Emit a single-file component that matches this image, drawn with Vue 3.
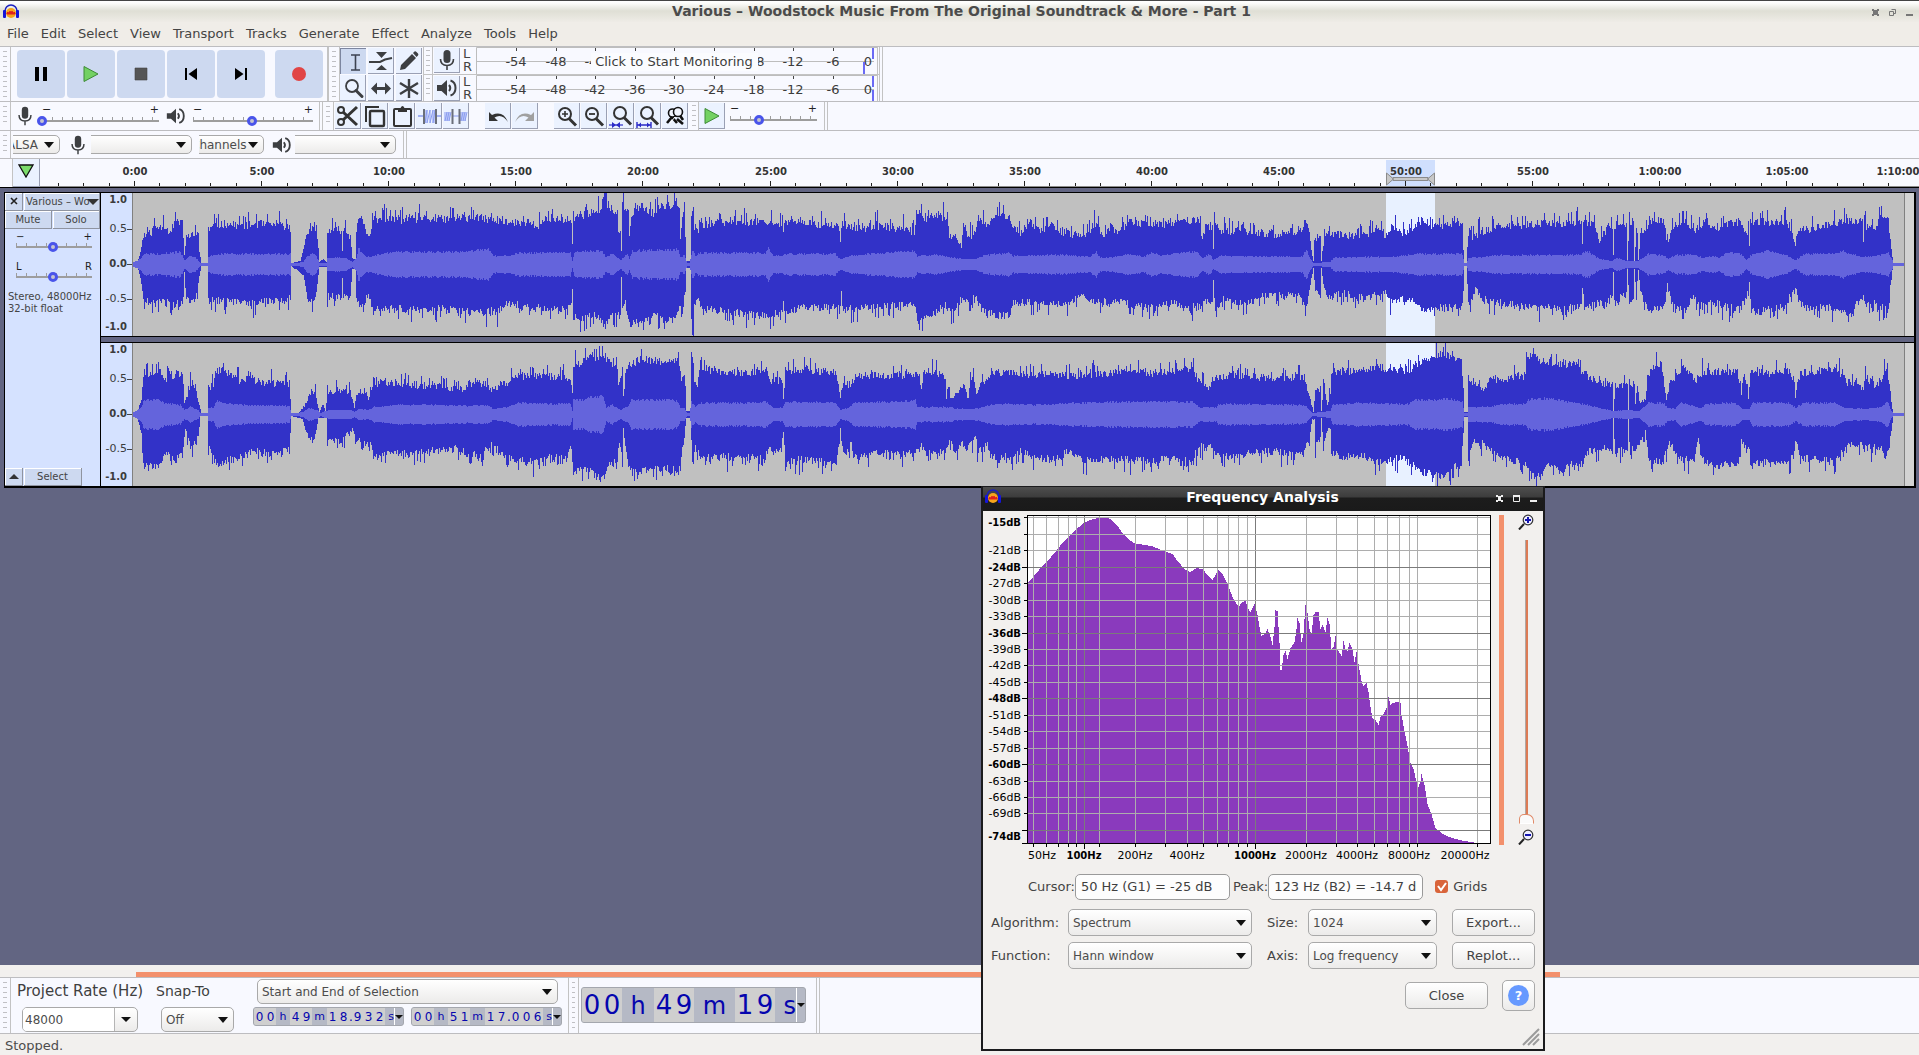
<script setup>
const menus = ['File', 'Edit', 'Select', 'View', 'Transport', 'Tracks', 'Generate', 'Effect', 'Analyze', 'Tools', 'Help']
const transport = [
  { id: 'pause', label: 'Pause' },
  { id: 'play', label: 'Play' },
  { id: 'stop', label: 'Stop' },
  { id: 'start', label: 'Skip to Start' },
  { id: 'end', label: 'Skip to End' },
  { id: 'record', label: 'Record' },
]
const tools = [
  { id: 'ibeam', label: 'Selection Tool' },
  { id: 'envelope', label: 'Envelope Tool' },
  { id: 'pencil', label: 'Draw Tool' },
  { id: 'magnify', label: 'Zoom Tool' },
  { id: 'shift', label: 'Time Shift Tool' },
  { id: 'multi', label: 'Multi Tool' },
]
const editGroups = [
  [
    { id: 'cut', label: 'Cut' },
    { id: 'copy', label: 'Copy' },
    { id: 'paste', label: 'Paste' },
    { id: 'trim', label: 'Trim Audio' },
    { id: 'silence', label: 'Silence Audio' },
  ],
  [
    { id: 'undo', label: 'Undo' },
    { id: 'redo', label: 'Redo' },
  ],
  [
    { id: 'zoomin', label: 'Zoom In' },
    { id: 'zoomout', label: 'Zoom Out' },
    { id: 'zoomsel', label: 'Fit Selection' },
    { id: 'zoomfit', label: 'Fit Project' },
    { id: 'zoomtoggle', label: 'Zoom Toggle' },
  ],
]
const meterMarks = [-54, -48, -42, -36, -30, -24, -18, -12, -6].map((db, i) => ({ db, x: 40 + Math.round(i * 39.6) }))
const meters = [
  { icon: 'mic', label: 'Recording level', prompt: true, marks: meterMarks.filter((k) => k.db < -36 || k.db > -24) },
  { icon: 'speaker', label: 'Playback level', prompt: false, marks: meterMarks },
]

// Time ruler: one tick a minute, a label each five
const minuteWidth = 25.42
const ticks = Array.from({ length: 73 }, (_, i) => i - 3).map((m) => ({
  x: Math.round(95 + m * minuteWidth),
  major: m >= 0 && m % 5 === 0,
}))
const labels = Array.from({ length: 15 }, (_, i) => {
  const m = i * 5
  const text = m < 60 ? `${m}:00` : `1:${String(m - 60).padStart(2, '0')}:00`
  return { text, x: i === 14 ? 1858 : Math.round(95 + m * minuteWidth) }
})

// Level envelopes, as "column:height" pairs
const env = {
  top1: '132:1 137:1 140:12 143:28 150:30 155:36 165:38 168:32 172:36 175:42 182:40 184:10 186:28 190:25 192:32 198:28 199:12 201:1 207:1 208:34 215:38 225:40 240:38 260:40 270:37 280:38 289:36 290:34 291:1 300:3 303:14 306:30 312:35 317:28 319:2 323:5 326:2 327:30 330:33 341:34 342:12 343:34 350:28 352:6 355:5 356:30 358:42 363:42 366:28 370:28 372:42 380:46 400:43 430:44 480:46 492:43 500:42 530:40 540:38 545:44 570:44 572:20 573:46 580:48 600:52 604:70 606:70 607:56 617:50 618:33 620:33 621:12 622:58 628:50 629:28 631:50 640:58 653:48 660:58 672:58 674:66 679:58 680:28 682:45 684:52 685:30 686:3 689:3 690:5 691:50 693:58 694:33 698:34 700:38 720:41 760:42 782:40 783:30 785:43 800:40 836:38 838:38 840:24 842:40 860:34 880:38 900:34 914:32 917:50 925:45 935:50 947:44 949:26 955:26 961:18 963:40 968:26 975:30 978:45 985:38 996:48 1009:48 1012:38 1020:30 1030:42 1040:32 1050:40 1065:30 1085:28 1095:40 1103:25 1110:38 1118:30 1128:42 1145:40 1160:38 1180:42 1199:44 1202:26 1205:36 1212:38 1213:14 1214:40 1220:32 1240:32 1260:31 1270:27 1290:33 1300:30 1304:40 1308:38 1310:20 1313:3 1314:25 1320:28 1321:3 1323:20 1326:30 1340:29 1360:28 1380:33 1387:27 1392:38 1400:30 1415:36 1422:44 1431:38 1441:38 1451:40 1462:38 1463:15 1464:1 1466:1 1468:30 1471:26 1476:27 1481:32 1501:38 1521:38 1542:40 1562:40 1581:42 1582:20 1584:40 1594:42 1597:28 1599:22 1602:28 1608:36 1612:32 1613:8 1614:38 1626:38 1627:2 1629:42 1633:42 1634:2 1636:34 1638:4 1640:28 1645:30 1648:42 1663:44 1667:20 1669:22 1671:36 1683:44 1696:34 1704:42 1716:36 1739:42 1746:28 1748:36 1749:16 1750:42 1769:42 1787:42 1793:26 1795:20 1798:34 1810:34 1835:40 1861:44 1863:22 1864:38 1876:34 1881:50 1888:45 1890:22 1892:6 1893:1 1904:1',
  bot1: '132:1 137:1 140:14 143:34 150:38 160:37 175:38 183:35 184:8 186:34 195:34 199:10 201:1 207:1 208:36 225:35 240:38 260:36 280:36 290:32 291:1 303:10 308:36 315:34 319:2 326:2 327:31 341:33 342:12 343:32 350:30 352:4 355:4 356:36 363:40 366:30 370:30 373:42 385:44 430:43 480:46 500:45 505:37 530:43 560:43 570:42 572:25 573:50 580:55 595:48 605:60 612:50 620:50 621:13 622:40 625:35 627:50 630:58 640:56 655:48 665:58 675:50 680:40 683:45 686:3 690:3 691:55 693:65 694:36 698:33 700:43 740:48 760:50 780:48 783:35 785:50 800:42 840:42 841:25 842:44 870:42 900:40 914:38 917:52 930:50 945:40 950:42 953:50 960:32 963:38 968:34 976:28 980:42 995:50 1010:50 1013:38 1025:36 1050:38 1070:38 1080:28 1090:36 1100:34 1110:38 1120:32 1130:40 1150:42 1170:38 1200:42 1204:34 1212:35 1213:15 1215:44 1222:34 1245:38 1265:30 1290:30 1302:30 1306:42 1310:20 1313:3 1315:25 1320:30 1321:3 1323:20 1327:32 1345:28 1360:32 1370:30 1385:28 1392:38 1400:34 1415:36 1425:46 1441:42 1462:42 1464:1 1466:1 1468:40 1476:22 1481:34 1501:38 1532:42 1562:42 1581:42 1582:22 1584:42 1599:38 1607:38 1612:30 1613:6 1615:40 1620:32 1626:30 1627:2 1629:36 1633:33 1634:4 1636:30 1638:5 1640:28 1648:42 1663:44 1667:20 1671:36 1683:44 1694:32 1700:40 1714:38 1739:44 1746:32 1749:15 1751:46 1769:44 1785:42 1790:30 1795:20 1798:34 1803:42 1835:42 1850:48 1863:30 1866:40 1876:38 1888:46 1890:22 1892:5 1893:1 1904:1',
  rms1: '132:1 140:5 145:10 160:10 180:12 184:4 190:8 195:7 199:2 201:0 207:0 208:8 225:10 290:10 291:0 303:2 306:7 312:11 316:8 319:1 326:1 327:6 345:6 352:2 356:6 358:16 365:7 372:7 380:10 400:12 460:12 488:15 494:8 508:8 520:11 570:11 572:3 574:12 602:13 605:7 612:10 620:4 627:10 629:5 632:13 673:14 678:15 680:7 684:9 687:0 689:0 692:14 695:8 700:11 765:11 768:16 773:8 782:8 785:10 835:10 840:5 850:8 870:10 900:12 914:13 917:8 935:9 960:5 975:5 985:9 1000:10 1010:11 1012:8 1060:9 1090:7 1096:12 1100:6 1115:7 1130:10 1143:7 1153:12 1160:8 1180:11 1196:12 1202:6 1210:10 1213:4 1220:8 1302:7 1306:14 1310:5 1313:1 1330:2 1333:6 1360:7 1390:7 1420:10 1462:10 1464:0 1466:0 1468:6 1481:7 1501:9 1580:9 1587:13 1599:5 1612:3 1616:6 1628:3 1638:3 1648:10 1665:8 1668:5 1675:9 1694:9 1704:6 1709:8 1719:6 1726:11 1739:11 1746:4 1751:9 1766:13 1785:9 1795:4 1805:10 1833:10 1842:13 1861:7 1876:8 1888:11 1892:4 1893:0 1904:0',
  top2: '132:1 137:2 141:14 143:40 152:40 160:43 166:34 170:36 178:42 182:36 184:10 190:26 195:28 199:8 201:1 207:1 208:26 213:30 216:44 225:42 235:36 243:30 248:42 255:32 270:30 289:30 291:1 298:1 304:8 310:20 315:20 319:2 323:10 325:2 327:20 335:22 345:22 351:18 354:6 356:18 365:24 368:15 372:28 380:32 390:32 400:30 425:28 440:28 445:25 463:24 468:30 480:28 492:24 500:30 509:30 511:37 530:38 560:36 570:36 572:24 573:48 580:50 590:56 600:56 610:52 613:44 617:48 618:28 622:45 623:16 624:28 626:45 632:50 640:55 660:52 675:55 679:50 681:30 684:38 685:20 686:3 690:3 691:60 693:48 694:28 697:30 699:46 720:42 740:40 765:42 770:32 782:34 783:14 785:42 800:44 820:42 836:42 838:30 840:15 842:28 850:30 855:38 870:38 900:38 919:38 921:25 923:40 935:42 945:35 946:14 948:30 950:18 957:18 963:30 968:15 970:38 974:30 976:18 980:32 986:28 990:40 1010:42 1025:38 1045:40 1060:38 1075:38 1100:40 1120:42 1130:46 1145:40 1170:42 1180:44 1193:45 1196:34 1202:30 1208:24 1213:35 1225:38 1250:37 1270:35 1290:36 1303:36 1308:22 1311:10 1313:2 1315:26 1320:20 1321:3 1323:26 1327:10 1330:20 1331:42 1350:42 1370:44 1380:46 1400:43 1410:44 1415:50 1430:54 1444:60 1451:56 1461:56 1463:25 1464:2 1467:2 1468:35 1476:28 1483:26 1491:34 1511:36 1525:38 1527:56 1532:58 1542:52 1562:50 1580:50 1582:36 1592:35 1603:30 1612:28 1613:2 1615:30 1627:28 1628:2 1629:26 1634:30 1635:10 1637:30 1639:12 1645:14 1648:38 1653:46 1661:48 1666:14 1670:32 1683:46 1690:38 1696:32 1702:42 1724:42 1737:42 1740:24 1742:16 1744:38 1748:16 1750:42 1769:40 1790:42 1795:18 1800:42 1815:40 1837:46 1845:32 1856:30 1862:24 1866:36 1876:28 1882:36 1886:46 1890:20 1892:5 1893:1 1904:1',
  bot2: '132:1 137:2 141:18 143:45 153:52 160:48 166:38 175:44 182:40 185:12 190:30 198:20 200:1 207:1 208:30 213:40 218:48 230:44 245:40 255:36 270:38 280:38 289:32 291:1 302:4 308:22 314:26 318:3 326:3 327:24 340:26 352:14 356:24 365:30 370:28 376:42 385:36 400:38 420:37 445:33 462:34 466:38 480:40 492:28 500:38 515:44 535:48 550:40 565:40 571:32 573:56 585:52 595:60 603:64 610:48 617:45 619:25 622:48 623:14 626:40 629:52 640:56 650:52 673:54 676:60 679:55 681:38 683:30 686:3 690:3 692:50 694:40 696:27 699:42 720:42 745:42 765:42 768:34 781:36 783:15 785:46 800:44 820:46 836:48 838:30 840:14 842:32 848:38 851:25 853:42 870:38 900:38 914:38 921:30 925:38 944:36 950:26 955:38 961:26 966:34 975:20 977:34 982:36 986:24 990:40 1000:42 1012:42 1021:36 1035:42 1050:44 1070:36 1080:44 1100:44 1120:44 1150:46 1170:42 1192:44 1193:50 1195:36 1201:28 1206:36 1210:28 1213:38 1225:40 1250:38 1270:36 1300:38 1308:28 1312:4 1314:4 1315:30 1320:24 1321:3 1323:32 1327:14 1330:12 1331:36 1340:42 1360:40 1380:46 1400:42 1410:48 1420:56 1441:60 1461:48 1464:2 1467:2 1468:44 1473:26 1483:28 1491:36 1511:44 1525:50 1532:60 1540:62 1547:50 1562:56 1572:48 1582:48 1587:36 1603:34 1612:32 1613:2 1615:36 1627:34 1628:2 1629:30 1633:36 1640:28 1645:14 1648:44 1663:46 1669:26 1678:44 1694:44 1698:26 1701:44 1714:50 1738:48 1741:24 1746:34 1749:26 1751:48 1764:46 1790:48 1795:20 1800:42 1815:44 1835:46 1840:36 1856:28 1866:32 1881:32 1886:44 1891:14 1893:1 1904:1',
  rms2: '132:1 140:6 144:14 160:14 163:11 180:9 184:4 190:7 198:4 200:0 207:0 208:6 213:6 216:13 225:11 240:9 289:8 291:0 303:2 308:6 317:4 320:1 328:4 350:4 354:2 358:5 368:4 374:7 400:9 430:9 470:8 488:9 493:5 508:7 518:11 545:10 570:10 572:3 573:14 583:14 590:17 603:17 606:7 612:9 620:4 628:8 631:14 672:14 678:12 680:6 684:6 687:0 689:0 691:12 695:7 700:11 760:11 766:12 773:6 782:6 785:12 835:11 840:4 850:7 853:11 900:12 915:14 917:7 945:7 960:5 975:5 990:9 1010:10 1030:9 1080:11 1130:12 1192:12 1200:6 1212:7 1216:6 1218:10 1300:9 1306:7 1312:1 1330:3 1332:9 1360:11 1390:10 1408:10 1415:14 1451:15 1462:12 1464:0 1467:0 1468:7 1491:7 1501:10 1524:10 1530:15 1547:15 1562:13 1582:10 1603:5 1613:3 1628:4 1639:3 1648:11 1663:11 1667:6 1675:5 1680:11 1701:6 1706:10 1734:11 1742:5 1749:5 1752:11 1790:11 1795:6 1803:11 1835:11 1845:6 1866:5 1881:7 1887:12 1891:3 1893:0 1904:0',
}
const X0 = 133
const X1 = 1904
const MID = 71
function columns(text, seed, rough, spikes) {
  const pts = text.split(' ').map((p) => p.split(':').map(Number))
  let s = seed
  const rand = () => {
    s = (s * 1664525 + 1013904223) % 4294967296
    return s / 4294967296
  }
  const out = []
  let k = 0
  for (let x = X0; x < X1; x++) {
    while (k < pts.length - 2 && pts[k + 1][0] <= x) k++
    const [xa, a] = pts[k]
    const [xb, b] = pts[k + 1]
    let v = a + ((b - a) * (x - xa)) / (xb - xa)
    const r = rand()
    const q = rand()
    if (v > 3) v += (r - 0.45) * rough * Math.min(1, v / 30)
    if (spikes && v > 18 && q > 0.78) v += (q - 0.78) * 58
    out.push(Math.max(1, Math.min(MID, Math.round(v))))
  }
  return out
}
function shape(top, bot) {
  let d = `M0 ${MID}`
  top.forEach((v, i) => { d += `V${MID - v}H${i + 1}` })
  for (let i = bot.length - 1; i >= 0; i--) d += `V${MID + 1 + bot[i]}H${i}`
  return d + 'Z'
}
const rms1 = columns(env.rms1, 5, 6, false)
const rms2 = columns(env.rms2, 9, 6, false)
const channels = [
  { peak: shape(columns(env.top1, 11, 8, true), columns(env.bot1, 23, 8, true)), rms: shape(rms1, rms1) },
  { peak: shape(columns(env.top2, 37, 8, true), columns(env.bot2, 51, 8, true)), rms: shape(rms2, rms2) },
]

// Spectrum plot
const dbRows = [
  [7, '-15dB', true], [35, '-21dB'], [52, '-24dB', true], [68, '-27dB'], [85, '-30dB'], [101, '-33dB'], [118, '-36dB', true],
  [134, '-39dB'], [150, '-42dB'], [167, '-45dB'], [183, '-48dB', true], [200, '-51dB'], [216, '-54dB'], [233, '-57dB'],
  [249, '-60dB', true], [266, '-63dB'], [282, '-66dB'], [298, '-69dB'], [321, '-74dB', true],
]
const hLines = [2, 19, 35, 52, 68, 85, 101, 118, 134, 150, 167, 183, 200, 216, 233, 249, 266, 282, 298, 315, 328]
const hBold = [52, 118, 183, 249, 315, 328]
const vLines = [6, 19, 31, 41, 49, 57, 72, 108, 138, 160, 176, 190, 201, 211, 220, 228, 279, 309, 330, 347, 360, 372, 382, 390, 450]
const vBold = [57, 228]
const hzLabels = [
  [15, '50Hz'], [57, '100Hz', true], [108, '200Hz'], [160, '400Hz'], [228, '1000Hz', true], [279, '2000Hz'], [330, '4000Hz'], [382, '8000Hz'], [438, '20000Hz'],
]
const spectrum = [
  [0, 68], [4, 64], [8, 59], [14, 52], [20, 46], [27, 38], [34, 29], [41, 22], [48, 15], [55, 9], [62, 5], [70, 3], [80, 2], [84, 5],
  [90, 11], [95, 18], [101, 24], [106, 28], [112, 29], [124, 31], [134, 35], [145, 39], [150, 46], [157, 54], [163, 57], [169, 53],
  [175, 54], [180, 60], [185, 65], [188, 60], [191, 55], [195, 59], [200, 69], [205, 82], [211, 92], [214, 88], [218, 85], [220, 93],
  [223, 97], [227, 89], [230, 100], [232, 112], [234, 121], [238, 118], [240, 114], [243, 122], [245, 130], [247, 112], [248, 95],
  [250, 96], [252, 128], [253, 155], [254, 155], [256, 140], [258, 136], [260, 144], [263, 133], [267, 127], [269, 114], [270, 103],
  [272, 108], [274, 127], [276, 118], [278, 90], [280, 98], [282, 114], [284, 119], [286, 100], [288, 97], [291, 97], [293, 114],
  [295, 110], [298, 117], [300, 103], [302, 109], [304, 134], [306, 132], [308, 121], [310, 134], [314, 141], [316, 126], [318, 134],
  [320, 136], [322, 128], [325, 134], [327, 147], [329, 137], [331, 149], [334, 166], [336, 171], [339, 168], [341, 177], [343, 192],
  [345, 203], [348, 205], [351, 210], [353, 202], [356, 199], [359, 193], [361, 182], [363, 190], [365, 188], [370, 187], [373, 188],
  [374, 200], [377, 216], [380, 231], [383, 248], [386, 254], [389, 267], [391, 272], [393, 266], [394, 259], [397, 270], [400, 289],
  [404, 299], [408, 313], [414, 318], [422, 322], [432, 325], [450, 328], [462, 329],
]
const spectrumPath = (() => {
  let d = 'M0 329'
  let k = 0
  for (let x = 0; x < 463; x++) {
    while (k < spectrum.length - 2 && spectrum[k + 1][0] <= x) k++
    const [xa, a] = spectrum[k]
    const [xb, b] = spectrum[k + 1]
    d += `V${Math.round(a + ((b - a) * (x - xa)) / (xb - xa))}H${x + 1}`
  }
  return d + 'V329Z'
})()

const selStart = ['00', 'h', '49', 'm', '18', '.', '932', 's']
const selEnd = ['00', 'h', '51', 'm', '17', '.', '006', 's']
const position = ['00', 'h', '49', 'm', '19', 's']
const cellClass = (p) => (p === '.' ? 'dig dot' : /\d/.test(p) ? 'dig' : `unit ${p}`)
</script>

<template>
  <div class="app">
    <svg class="sprite" aria-hidden="true">
      <symbol id="logo" viewBox="0 0 16 16">
        <path d="M2 9V7a6 6 0 0 1 12 0v2" fill="none" stroke="#1a1fc0" stroke-width="1.5" />
        <circle cx="8" cy="9" r="5" fill="#f7a51c" />
        <path d="M4 9l1-1 1 2 1-3 1 3 1-3 1 3 1-2 1 1v1H4z" fill="#e0201c" stroke="#e0201c" />
        <rect x="0" y="6" width="3" height="8" rx="1" fill="#1515d8" />
        <rect x="13" y="6" width="3" height="8" rx="1" fill="#1515d8" />
      </symbol>
      <symbol id="pause" viewBox="0 0 16 16"><path d="M2 1h4v14H2zM10 1h4v14h-4z" fill="#000" /></symbol>
      <symbol id="play" viewBox="0 0 16 16"><path d="M1 .5v15L15 8z" fill="#73d163" stroke="#3d8a36" /></symbol>
      <symbol id="stop" viewBox="0 0 16 16"><path d="M2 2h12v12H2z" fill="#555" stroke="#444" stroke-width=".6" /></symbol>
      <symbol id="start" viewBox="0 0 16 16"><path d="M2 2h2v12H2zM14 2v12L5.500 8z" fill="#000" /></symbol>
      <symbol id="end" viewBox="0 0 16 16"><path d="M12 2h2v12h-2zM2 2v12l8.500-6z" fill="#000" /></symbol>
      <symbol id="record" viewBox="0 0 16 16"><circle cx="8" cy="8" r="7" fill="#e14545" /></symbol>
      <symbol id="ibeam" viewBox="0 0 24 24"><path d="M9 5h9M9 20h9M13.500 5v15" fill="none" stroke="#3c4250" stroke-width="1.600" /></symbol>
      <symbol id="envelope" viewBox="0 0 24 24"><path d="M7 3h11l-5.500 6zM7 21h11l-5.500-5z" fill="#3d3f42" /><path d="M0 13h11l5-2.500 7-1.500" fill="none" stroke="#3d3f42" stroke-width="2" /></symbol>
      <symbol id="pencil" viewBox="0 0 24 24"><path d="M3 21l1-5L15 5l4 4L8 20zM16 4l1.500-1.500q1-.5 2 .5l1.500 1.500q.8 1 0 2L19.500 8z" fill="#3d3f42" /></symbol>
      <symbol id="magnify" viewBox="0 0 24 24"><circle cx="11" cy="10" r="6" fill="none" stroke="#3d3f42" stroke-width="1.800" /><path d="M15 14.500l6 6" stroke="#3d3f42" stroke-width="3" stroke-linecap="round" /></symbol>
      <symbol id="shift" viewBox="0 0 24 24"><path d="M2 12.500l6-6v4.500h8V6.500l6 6-6 6V14H8v4.500z" fill="#3d3f42" /></symbol>
      <symbol id="multi" viewBox="0 0 24 24"><path d="M12 3v19M3 7l18 11M3 18L21 7" fill="none" stroke="#3d3f42" stroke-width="2.400" /></symbol>
      <symbol id="mic" viewBox="0 0 24 24"><rect x="8.500" y="2" width="7" height="13" rx="3.500" fill="#3d3f42" /><path d="M5.500 11q0 6.500 6.500 6.500t6.500-6.500M12 17.500V22" fill="none" stroke="#3d3f42" stroke-width="1.600" /></symbol>
      <symbol id="speaker" viewBox="0 0 24 24"><path d="M2 9h4.500L12 4v16l-5.500-5H2z" fill="#3d3f42" /><path d="M14 9q2.500 3 0 6M15.500 4.500q5 1.500 5 7.500t-5 7.500" fill="none" stroke="#3d3f42" stroke-width="2" /></symbol>
      <symbol id="cut" viewBox="0 0 24 24"><path d="M7 8l14 13M7 16L21 3" stroke="#333" stroke-width="3" /><circle cx="5" cy="6" r="3" fill="none" stroke="#333" stroke-width="2" /><circle cx="5" cy="18" r="3" fill="none" stroke="#333" stroke-width="2" /></symbol>
      <symbol id="copy" viewBox="0 0 24 24"><path d="M3 18V3h13" fill="none" stroke="#333" stroke-width="2" /><rect x="7" y="7" width="14" height="15" rx="1" fill="none" stroke="#333" stroke-width="2.400" /></symbol>
      <symbol id="paste" viewBox="0 0 24 24"><rect x="4" y="5" width="17" height="17" rx="1" fill="none" stroke="#333" stroke-width="2" /><path d="M8 4h2.500q2-4 4 0H17v4H8z" fill="#333" /></symbol>
      <symbol id="trim" viewBox="0 0 24 24"><path d="M1 12h5M20 12h4" stroke="#8a9cf0" stroke-width="1.500" /><path d="M8 6v13l2-13v13l3-13v13l3-13v13l2-13v13" fill="none" stroke="#8a9cf0" /><path d="M7 5v15M19 5v15" stroke="#6a6f7a" stroke-width="2" /></symbol>
      <symbol id="silence" viewBox="0 0 24 24"><path d="M1 8v9l2-9v9l2-9v9l2-9M9 12h6M17 8v9l2-9v9l2-9v9l2-9" fill="none" stroke="#8a9cf0" /><path d="M8.500 5v15M15.500 5v15" stroke="#6a6f7a" stroke-width="2" /></symbol>
      <symbol id="undo" viewBox="0 0 24 24"><path d="M3 8v9h9l-3.500-3.500Q16 9 22 18 17 6 6 11z" fill="#333" /></symbol>
      <symbol id="redo" viewBox="0 0 24 24"><path d="M21 8v9h-9l3.500-3.500Q8 9 2 18 7 6 18 11z" fill="#a0a0a0" /></symbol>
      <symbol id="glass" viewBox="0 0 24 24"><circle cx="10" cy="10" r="6" fill="none" stroke="#333" stroke-width="2" /><path d="M14 14.500l7 7" stroke="#333" stroke-width="3" /></symbol>
      <symbol id="zoomin" viewBox="0 0 24 24"><use href="#glass" /><path d="M7 10h6M10 7v6" stroke="#333" stroke-width="1.600" /></symbol>
      <symbol id="zoomout" viewBox="0 0 24 24"><use href="#glass" /><path d="M7 10h6" stroke="#333" stroke-width="1.800" /></symbol>
      <symbol id="zoomsel" viewBox="0 0 24 24"><use href="#glass" x="1" y="-1" /><path d="M0 21h14" stroke="#2a2ac8" stroke-width="1.200" /><path d="M3 18l4 3-4 3zM11 18l-4 3 4 3z" fill="#2a2ac8" /></symbol>
      <symbol id="zoomfit" viewBox="0 0 24 24"><use href="#glass" x="1" y="-1" /><path d="M1 21h14M1 18v6M15 18v6" stroke="#2a2ac8" stroke-width="1.400" /><path d="M2 21l3-2.500v5zM14 21l-3-2.500v5z" fill="#2a2ac8" /></symbol>
      <symbol id="zoomtoggle" viewBox="0 0 24 24"><path d="M9 13l-5 6M14 15l6 5M7 11l7 8M16 10l4 6" stroke="#111" stroke-width="2.600" /><circle cx="9.500" cy="9" r="4" fill="#f4f7ff" stroke="#111" stroke-width="1.600" /><circle cx="15" cy="8" r="4.500" fill="#f4f7ff" stroke="#111" stroke-width="1.600" /><path d="M12 13l-5 6" stroke="#fff" /></symbol>
      <symbol id="lens" viewBox="0 0 16 16"><circle cx="10" cy="6" r="4.800" fill="#eef" stroke="#333" stroke-width="1.200" /><path d="M6 10l-5 5.500" stroke="#222" stroke-width="2" /></symbol>
    </svg>

    <header class="titlebar">
      <svg class="logo"><use href="#logo" /></svg>
      <h1>Various – Woodstock Music From The Original Soundtrack &amp; More - Part 1</h1>
      <div class="winbtns">
        <button type="button" aria-label="Close window"><svg viewBox="0 0 7 7"><path d="M0 0h2v1h3V0h2v2H6v3h1v2H5V6H2v1H0V5h1V2H0z" /></svg></button>
        <button type="button" aria-label="Restore window"><svg viewBox="0 0 7 7"><path d="M2.500 .5h4v4h-2M.5 2.500h4v4h-4z" fill="none" stroke="#777" /></svg></button>
        <button type="button" aria-label="Minimize window"><svg viewBox="0 0 7 7"><path d="M0 5h7v2H0z" /></svg></button>
      </div>
    </header>
    <nav class="menubar"><button v-for="m in menus" :key="m" type="button">{{ m }}</button></nav>

    <div class="bar row1">
      <div class="grip"></div>
      <div class="transport">
        <button v-for="t in transport" :key="t.id" type="button" :aria-label="t.label" :class="t.id"><svg><use :href="'#' + t.id" /></svg></button>
      </div>
      <div class="grip"></div>
      <div class="tools">
        <button v-for="(t, i) in tools" :key="t.id" type="button" :aria-label="t.label" class="tool" :class="{ on: i === 0 }"><svg><use :href="'#' + t.id" /></svg></button>
      </div>
      <div class="meters">
        <div v-for="m in meters" :key="m.icon" class="meter">
          <div class="grip small"></div>
          <button type="button" class="tool" :aria-label="m.label"><svg><use :href="'#' + m.icon" /></svg></button>
          <div class="lr"><span>L</span><span>R</span></div>
          <svg class="scale" width="402" height="27">
            <path d="M.5 27V.5H402M1 14.500H398" fill="none" stroke="#bdbdbd" />
            <path v-for="k in meterMarks" :key="k.db" :d="`M${k.x + .5} 1v3`" stroke="#444" />
            <text v-for="k in m.marks" :key="'t' + k.db" :x="k.x" y="19">{{ k.db }}</text>
            <text x="392" y="19">0</text>
            <path d="M397 1v11" stroke="#6a6af5" stroke-width="2" />
            <path :d="m.prompt ? 'M388 15v12' : 'M397 15v12'" stroke="#6a6af5" stroke-width="2" />
            <g v-if="m.prompt">
              <rect x="115" y="6" width="167" height="18" fill="#fbfcff" />
              <text x="198" y="19">Click to Start Monitoring</text>
            </g>
          </svg>
        </div>
      </div>
      <div class="barend"></div>
    </div>

    <div class="bar row2">
      <div class="grip"></div>
      <div class="mixer">
        <svg class="ico"><use href="#mic" /></svg>
        <div class="vol rec"><span>−</span><span>+</span><input type="range" min="0" max="100" value="0" aria-label="Recording volume" /></div>
        <svg class="ico"><use href="#speaker" /></svg>
        <div class="vol out"><span>−</span><span>+</span><input type="range" min="0" max="100" value="49" aria-label="Playback volume" /></div>
      </div>
      <div class="barend"></div>
      <div class="grip"></div>
      <div class="edit">
        <div v-for="(g, i) in editGroups" :key="i" class="group">
          <button v-for="b in g" :key="b.id" type="button" class="tool" :aria-label="b.label"><svg><use :href="'#' + b.id" /></svg></button>
        </div>
      </div>
      <div class="grip small"></div>
      <button type="button" class="tool playat" aria-label="Play at speed"><svg><use href="#play" /></svg></button>
      <div class="vol speed"><span>−</span><span>+</span><input type="range" min="0" max="100" value="33" aria-label="Playback speed" /></div>
      <div class="barend"></div>
    </div>

    <div class="bar row3">
      <div class="grip"></div>
      <div class="clip host"><select aria-label="Audio host"><option>ALSA</option></select></div>
      <svg class="ico"><use href="#mic" /></svg>
      <div class="clip dev"><select aria-label="Recording device"><option></option></select></div>
      <div class="clip chan"><select aria-label="Recording channels"><option>Channels</option></select></div>
      <svg class="ico"><use href="#speaker" /></svg>
      <div class="clip dev"><select aria-label="Playback device"><option></option></select></div>
      <div class="barend"></div>
    </div>

    <div class="timeline">
      <div class="pinspace"></div>
      <button type="button" class="pin" aria-label="Pinned play head"><svg viewBox="0 0 16 14"><path d="M1 1h14L8 13z" fill="#7bdc6b" stroke="#111" stroke-width="1.300" /></svg></button>
      <svg class="times" height="28">
        <rect x="1346" y="1" width="49" height="27" fill="#d0dffd" />
        <path d="M1346.500 14v12l7-6zM1394.500 14v12l-7-6zM1353 18.500h35v3h-35z" fill="#c8c8c8" stroke="#8b8b8b" />
        <path d="M0 27.500H1900" stroke="#8b8b8b" />
        <path v-for="t in ticks" :key="t.x" :d="`M${t.x - .5} ${t.major ? 22 : 24}V27`" stroke="#222" />
        <text v-for="l in labels" :key="l.text" :x="l.x" y="16">{{ l.text }}</text>
      </svg>
    </div>

    <main class="desk">
      <section class="track">
        <aside class="panel">
          <div class="prow"><button type="button" class="pb sq" aria-label="Close track"><svg viewBox="0 0 8 8"><path d="M1 1l6 6M7 1L1 7" stroke="#222" stroke-width="1.600" /></svg></button><button type="button" class="pb name"><span>Various – Wo</span><i></i></button></div>
          <div class="prow"><button type="button" class="pb">Mute</button><button type="button" class="pb">Solo</button></div>
          <div class="vol gain"><span>−</span><span>+</span><input type="range" min="0" max="100" value="49" aria-label="Gain" /></div>
          <div class="vol gain"><span>L</span><span>R</span><input type="range" min="0" max="100" value="49" aria-label="Pan" /></div>
          <p>Stereo, 48000Hz<br />32-bit float</p>
          <div class="prow"><button type="button" class="pb sq" aria-label="Collapse"><svg viewBox="0 0 12 8"><path d="M1 7h10L6 2z" fill="#333" /></svg></button><button type="button" class="pb sel">Select</button></div>
        </aside>
        <div class="channels">
          <div v-for="(c, i) in channels" :key="i" class="channel">
            <div class="vruler"><b>1.0</b><span class="mark">0.5</span><b class="mark">0.0</b><span class="mark">-0.5</span><b>-1.0</b></div>
            <svg class="wave" viewBox="0 0 1781 143" preserveAspectRatio="none" shape-rendering="crispEdges">
              <rect width="1781" height="143" fill="#c0c0c0" />
              <rect x="1253" width="49" height="143" fill="#e8f1ff" />
              <path :d="c.peak" fill="#3232c8" />
              <path :d="c.rms" fill="#6464dc" />
              <rect x="1771" width="1" height="143" fill="#808080" />
              <rect x="1772" width="9" height="143" fill="#d3d3d3" />
            </svg>
          </div>
        </div>
      </section>
    </main>

    <div class="hscroll"><div></div></div>

    <footer class="bar selbar">
      <div class="grip"></div>
      <div class="field rate"><label for="rate">Project Rate (Hz)</label><div class="combo"><input id="rate" type="text" value="48000" /><button type="button" aria-label="Choose rate"><i></i></button></div></div>
      <div class="field snap"><label for="snap">Snap-To</label><select id="snap"><option>Off</option></select></div>
      <div class="field seltime">
        <select aria-label="Selection mode"><option>Start and End of Selection</option></select>
        <div class="pair">
          <div v-for="(t, n) in [selStart, selEnd]" :key="n" class="time"><span v-for="(p, i) in t" :key="i" :class="cellClass(p)"><em v-for="(ch, j) in p" :key="j">{{ ch }}</em></span><button type="button" aria-label="Time format"><i></i></button></div>
        </div>
      </div>
      <div class="grip time-grip"></div>
      <div class="time big"><span v-for="(p, i) in position" :key="i" :class="cellClass(p)"><em v-for="(ch, j) in p" :key="j">{{ ch }}</em></span><button type="button" aria-label="Time format"><i></i></button></div>
      <div class="barend"></div>
    </footer>
    <div class="status">Stopped.</div>

    <section class="dialog" role="dialog" aria-label="Frequency Analysis">
      <header>
        <svg class="logo"><use href="#logo" /></svg>
        <h2>Frequency Analysis</h2>
        <div class="winbtns">
          <button type="button" aria-label="Close dialog"><svg viewBox="0 0 7 7"><path d="M0 0h2v1h3V0h2v2H5v3h2v2H5V6H2v1H0V5h2V2H0z" /></svg></button>
          <button type="button" aria-label="Maximize"><svg viewBox="0 0 7 7"><path d="M.5 1h6v5.500h-6z" fill="none" stroke="#eee" /><path d="M0 0h7v2H0z" /></svg></button>
          <button type="button" aria-label="Minimize"><svg viewBox="0 0 7 7"><path d="M0 5h7v2H0z" /></svg></button>
        </div>
      </header>
      <div class="chartrow">
        <svg class="chart" width="511" height="350" shape-rendering="crispEdges">
          <g transform="translate(44 1)">
            <rect width="464" height="329" fill="#fff" />
            <path :d="spectrumPath" fill="#8a3abd" />
            <path v-for="x in vLines" :key="'v' + x" :d="`M${x + .5} 0V329`" :stroke="vBold.includes(x) ? '#7b7b7b' : '#adadad'" />
            <path v-for="y in hLines" :key="'h' + y" :d="`M0 ${y + .5}H464`" :stroke="hBold.includes(y) ? '#7b7b7b' : '#adadad'" />
            <path v-for="x in vLines" :key="'w' + x" :d="`M${x + .5} 329v${vBold.includes(x) ? 5 : 3}`" stroke="#000" />
            <path v-for="y in hLines" :key="'i' + y" :d="`M0 ${y + .5}h${hBold.includes(y) ? -5 : -3}`" stroke="#000" />
            <path d="M.5 .5H463.500V328.500H.5z" fill="none" stroke="#000" />
            <text v-for="r in dbRows" :key="r[1]" x="-6" :y="r[0] + 1" class="db" :class="{ b: r[2] }">{{ r[1] }}</text>
            <text v-for="r in hzLabels" :key="r[1]" :x="r[0]" y="344" class="hz" :class="{ b: r[2] }">{{ r[1] }}</text>
          </g>
        </svg>
        <div class="pan"></div>
        <div class="zoomcol">
          <svg width="16" height="16"><use href="#lens" /><path d="M7 6h6M10 3v6" stroke="#1515b0" stroke-width="2" /></svg>
          <input type="range" min="0" max="100" value="0" aria-label="Vertical zoom" />
          <svg width="16" height="16"><use href="#lens" /><path d="M7 6h6" stroke="#1515b0" stroke-width="2" /></svg>
        </div>
      </div>
      <div class="info">
        <label for="cur">Cursor:</label><input id="cur" type="text" readonly value="50 Hz (G1) = -25 dB" />
        <label for="peak">Peak:</label><input id="peak" type="text" readonly value="123 Hz (B2) = -14.7 dB" />
        <label class="grids"><input type="checkbox" checked /><span>Grids</span></label>
      </div>
      <div class="form">
        <label for="alg">Algorithm:</label><select id="alg"><option>Spectrum</option></select>
        <label for="size" class="second">Size:</label><select id="size"><option>1024</option></select>
        <button type="button">Export...</button>
        <label for="fn">Function:</label><select id="fn"><option>Hann window</option></select>
        <label for="axis" class="second">Axis:</label><select id="axis"><option>Log frequency</option></select>
        <button type="button">Replot...</button>
      </div>
      <div class="actions"><button type="button">Close</button><button type="button" class="help" aria-label="Help"><span>?</span></button></div>
      <svg class="resize" width="18" height="18"><path d="M1 17L17 1M6 17L17 6M11 17l6-6" stroke="#9b9b9b" stroke-width="2" /></svg>
    </section>
  </div>
</template>

<style>
body { margin: 0; background: #626582; }
</style>

<style scoped>
.app { position: relative; display: flex; flex-direction: column; min-height: 100vh; overflow: hidden; font: 13px/16px "DejaVu Sans", sans-serif; color: #444; background: #626582; }
.app *, .app *::after { box-sizing: border-box; }
.sprite { position: absolute; width: 0; height: 0; }
button { font: inherit; color: inherit; padding: 0; margin: 0; border: 0; background: none; }
h1, h2, p { margin: 0; font-size: 14px; }
i { display: block; border: 5px solid transparent; border-top-color: #111; border-bottom: 0; }

.titlebar { display: flex; align-items: flex-start; height: 22px; padding: 3px 6px 0 3px; border-top: 1px solid #444; background: linear-gradient(#fff, #fdfdfb 2px, #dfdfd5 10px, #f0ede8 22px); }
.logo { width: 16px; height: 16px; }
.titlebar h1 { flex: 1; padding-left: 32px; text-align: center; line-height: 14px; color: #4b4b4b; }
.winbtns { display: flex; gap: 10px; }
.winbtns button { width: 7px; height: 14px; }
.winbtns svg { display: block; width: 7px; height: 7px; margin-top: 3px; fill: #777; }
.menubar { display: flex; gap: 12px; height: 24px; padding: 0 7px; background: #f0ede8; }

.bar { display: flex; border-top: 1px solid #bdbdc0; background: #f8f9ff; }
.row1 { height: 55px; }
.row2 { height: 29px; }
.row3 { height: 28px; align-items: center; }
.grip { align-self: stretch; width: 11px; padding: 4px 3px; border-right: 1px solid #c3c3c3; background: repeating-linear-gradient(#c0c0c4 0 1px, transparent 1px 5px) content-box; }
.grip.small { width: 9px; padding: 3px 2px; }
.barend { width: 4px; border: 1px solid #c3c3c3; border-width: 0 1px; align-self: stretch; }

.transport { display: flex; gap: 2px; padding: 3px 4px 3px 6px; border-right: 2px solid #c3c3c3; }
.transport button { width: 48px; height: 48px; border-radius: 4px; background: #cdd9f0; display: grid; place-items: center; }
.transport svg { width: 16px; height: 16px; }
.transport .record { margin-left: 8px; }
.tools { display: grid; grid-template-columns: 26px 26px 26px; gap: 1px 2px; padding: 1px 1px 0 0; border-right: 1px solid #c3c3c3; }
.tool { width: 26px; height: 26px; background: #ebf2ff; border-right: 1px solid #9aa0b4; border-bottom: 1px solid #9aa0b4; display: grid; place-items: center; }
.tool.on { background: #cdd9f0; border: 1px solid #7d86a0; border-width: 1px 0 0 1px; }
.tool svg { width: 24px; height: 24px; }
.meter { display: flex; height: 27px; }
.meter + .meter { border-top: 1px solid #c3c3c3; }
.meter .tool { margin: 1px 3px 0 1px; height: 25px; }
.lr { width: 13px; display: flex; flex-direction: column; line-height: 13px; }
.scale { border-right: 1px solid #c3c3c3; margin-right: 1px; }
.scale text { font-size: 13px; text-anchor: middle; fill: #3c3c3c; }

.mixer { display: flex; align-items: center; padding-left: 2px; }
.ico { width: 24px; height: 22px; }
.vol { position: relative; display: flex; justify-content: space-between; padding: 0 5px; line-height: 14px; color: #222; }
.vol input { position: absolute; left: 0; top: 9px; appearance: none; margin: 0; width: 100%; height: 15px; background: linear-gradient(#9d9d9d, #9d9d9d) 5px 8px / calc(100% - 10px) 2px no-repeat, repeating-linear-gradient(90deg, #9d9d9d 0 1px, transparent 1px 10px) 5px 5px / calc(100% - 10px) 3px no-repeat; }
.vol input::-webkit-slider-thumb { appearance: none; width: 10px; height: 10px; border: 3px solid #4954ea; border-radius: 50%; background: #c4c4d0; margin-top: 2px; }
.mixer .vol, .speed { height: 26px; font-size: 11px; line-height: 13px; }
.rec { width: 127px; }
.out { width: 130px; margin-right: 1px; }
.edit { display: flex; gap: 16px; padding: 1px 2px 0 1px; }
.group { display: flex; gap: 1px; }
.playat { margin-top: 1px; }
.playat svg { width: 16px; height: 16px; }
.speed { width: 97px; margin-right: 2px; }

select, .combo, .info input[type="text"], .form button, .actions button { border: 1px solid #a9a9a9; border-radius: 5px; background: linear-gradient(#fff, #ecebea); }
select { appearance: none; font: 12px/16px "DejaVu Sans", sans-serif; color: #4c4c4c; padding: 0 24px 0 4px; background: url("data:image/svg+xml,%3Csvg xmlns='http://www.w3.org/2000/svg' width='10' height='6'%3E%3Cpath d='M0 0h10L5 6z' fill='%23111'/%3E%3C/svg%3E") no-repeat right 5px center / 10px 6px, linear-gradient(#fff, #ecebea); }
.clip { overflow: hidden; height: 19px; }
.clip select { width: calc(100% + 10px); margin-left: -10px; height: 19px; }
.host { width: 47px; margin: 0 6px 0 2px; }
.host select { padding: 0 0 0 3px; }
.chan select { padding: 0 0 0 1px; }
.dev { width: 101px; margin: 0 7px 0 1px; }
.chan { width: 65px; margin-right: 6px; }

.timeline { display: flex; height: 30px; border-top: 1px solid #bdbdc0; border-bottom: 1px solid #000; background: #f8f9ff; }
.pinspace { width: 13px; border-right: 1px solid #c3c3c3; }
.pin { width: 27px; background: #ebf2ff; border-right: 1px solid #9aa0b4; border-bottom: 1px solid #9aa0b4; }
.pin svg { width: 16px; height: 14px; display: block; margin: 0 auto 3px; }
.times { flex: 1; min-width: 0; }
.times text { font: bold 10px "DejaVu Sans", sans-serif; text-anchor: middle; fill: #333; }

.desk { flex: 1; padding: 4px 3px 0 4px; }
.track { display: flex; border: 1px solid #000; border-width: 1px 2px 2px 1px; background: #d5e2ff; }
.panel { width: 96px; border-right: 1px solid #000; display: flex; flex-direction: column; font-size: 10px; line-height: 12px; }
.prow { display: flex; gap: 1px; height: 18px; flex: none; }
.pb { flex: 1; background: #cdd9f0; border: 1px solid #8f94a0; border-width: 0 1px 1px 0; box-shadow: inset 1px 1px #fff; white-space: nowrap; }
.pb.sq { flex: none; width: 18px; }
.pb svg { width: 12px; height: 8px; }
.pb.name { display: flex; align-items: center; padding-left: 2px; }
.pb.name span { width: 61px; }
.pb.name i { border-width: 6px 6px 0; border-top-color: #333; }
.pb.sel { flex: none; width: 58px; }
.gain { width: 86px; height: 30px; margin-left: 6px; padding-top: 1px; }
.panel p { padding: 2px 3px; flex: 1; font-size: 10px; white-space: nowrap; }
.channels { flex: 1; min-width: 0; display: flex; flex-direction: column; gap: 5px; background: #626582; }
.channel { display: flex; height: 144px; background: #d5e2ff; }
.channel:first-child { border-bottom: 1px solid #000; }
.channel + .channel { border-top: 1px solid #000; }
.vruler { width: 32px; display: flex; flex-direction: column; align-items: flex-end; padding-right: 5px; border-right: 1px solid #808080; font-size: 11px; line-height: 14px; color: #3c3c3c; }
.vruler b { font-size: 10px; }
.vruler .mark { position: relative; margin-top: 21px; }
.vruler b:first-child + .mark { margin-top: 15px; }
.vruler .mark::after { content: ""; position: absolute; left: 100%; top: 7px; width: 5px; height: 1px; background: #444; }
.vruler b:last-child { margin-top: 14px; }
.wave { flex: 1; min-width: 0; height: 143px; display: block; }

.hscroll { height: 12px; background: #f2f0ee; padding: 7px 359px 0 136px; }
.hscroll div { height: 5px; background: #f3906c; }
.selbar { height: 57px; border-bottom: 1px solid #bdbdc0; }
.field { display: flex; flex-direction: column; padding-top: 1px; }
.field label { height: 28px; line-height: 24px; font-size: 15px; color: #3f3f3f; white-space: nowrap; }
.rate { width: 139px; padding-left: 6px; }
.combo { display: flex; width: 116px; height: 25px; margin-left: 5px; overflow: hidden; }
.combo input { width: 92px; border: 0; border-right: 1px solid #b5b5b5; background: #fff; font: 12px "DejaVu Sans", sans-serif; color: #4c4c4c; padding: 0 2px; }
.combo button { flex: 1; }
.combo i { width: 0; margin: 0 auto; }
.snap { width: 101px; padding-left: 6px; }
.snap label { font-size: 14px; }
.snap select { width: 73px; height: 25px; margin-left: 5px; }
.seltime { padding-left: 2px; }
.seltime > select { width: 301px; height: 25px; margin: 0 0 3px 4px; }
.pair { display: flex; gap: 7px; }
.time { display: flex; width: 151px; height: 19px; border: 1px solid #a4a7ae; border-radius: 3px; background: #b5b9c5; color: #0505ae; font-size: 12px; line-height: 18px; overflow: hidden; }
.time span { flex: none; }
.time em { font-style: normal; display: inline-block; width: 11px; text-align: center; }
.dig { background: #cfcfcf; }
.time .dot em { width: 3px; }
.time .unit em { width: auto; }
.unit { text-align: center; }
.unit.h { width: 14px; font-size: 11px; }
.unit.m { width: 15px; font-size: 11px; }
.time .unit.s { flex: 1; text-align: right; font-size: 11px; }
.time button { width: 9px; border-left: 1px solid #fff; }
.time i { border-width: 4px 4px 0; }
.time-grip { width: 11px; margin-left: 6px; border-left: 1px solid #c3c3c3; }
.big { width: 225px; height: 36px; margin: 9px 10px 0 2px; font-size: 26px; line-height: 34px; }
.big em { width: 20px; }
.big .unit { font-size: 24px; line-height: 37px; }
.big .unit.h { width: 32px; }
.big .unit.m { width: 41px; }
.time.big .unit.s { font-size: 24px; }
.status { height: 21px; padding: 0 5px; line-height: 23px; background: #f2f0ee; color: #4c4c4c; }

.dialog { position: absolute; left: 981px; top: 486px; width: 564px; height: 565px; border: 2px solid #1b1b1d; border-top-width: 1px; background: #f2f0ee; display: flex; flex-direction: column; }
.dialog header { display: flex; height: 24px; padding: 2px 6px 0 2px; background: linear-gradient(#4e4e4e, #3c3c3c 10px, #1c1c1c 11px, #1a1a1a); }
.dialog h2 { flex: 1; padding-left: 28px; text-align: center; line-height: 16px; color: #fff; }
.dialog .winbtns svg { margin-top: 5px; fill: #eee; }
.chartrow { display: flex; padding: 3px 9px 0 0; height: 353px; }
.chart { flex: none; }
.chart text { font-size: 11px; fill: #000; }
.chart text.b { font-size: 10px; font-weight: bold; }
.chart .db { text-anchor: end; dominant-baseline: middle; }
.chart .hz { text-anchor: middle; }
.pan { width: 5px; height: 330px; margin: 1px 0 0 5px; background: #f3906c; }
.zoomcol { flex: 1; display: flex; flex-direction: column; align-items: flex-end; }
.zoomcol input { appearance: none; writing-mode: vertical-lr; direction: rtl; width: 16px; height: 284px; margin: 10px 0 5px; background: linear-gradient(90deg, #b0a8a4 0 1px, #dd7b55 1px) center / 3px 100% no-repeat; }
.zoomcol input::-webkit-slider-thumb { appearance: none; width: 15px; height: 10px; border: 1px solid #e08a68; border-bottom-color: #fff; border-radius: 5px 7px 0 0; background: #fafafa; }
.info { display: flex; align-items: center; padding: 9px 0 0 45px; height: 36px; }
.info input[type="text"] { width: 155px; height: 26px; padding: 0 5px; margin: 0 3px 0 0; font: 13px "DejaVu Sans", sans-serif; color: #3f3f3f; background: #fdfdfd; border-color: #9a9a9a; }
.grids { display: flex; align-items: center; gap: 5px; margin-left: 9px; }
.grids input { appearance: none; width: 13px; height: 13px; margin: 0; border-radius: 3px; background: url("data:image/svg+xml,%3Csvg xmlns='http://www.w3.org/2000/svg' width='13' height='13'%3E%3Cpath d='M3 6l3 4 5-7' fill='none' stroke='white' stroke-width='2'/%3E%3C/svg%3E") #d9643a; }
.form { display: grid; grid-template-columns: 77px 184px 56px 129px 83px; row-gap: 6px; align-items: center; padding: 9px 8px 0; }
.form label { white-space: nowrap; }
.form .second { padding-left: 15px; }
.form select { height: 27px; }
.form button { height: 27px; margin-left: 15px; width: 83px; }
.actions { display: flex; justify-content: flex-end; align-items: center; gap: 14px; padding: 11px 8px 0; }
.actions button { width: 83px; height: 27px; }
.actions .help { width: 33px; height: 31px; display: grid; place-items: center; }
.help span { width: 21px; height: 21px; border-radius: 50%; background: #6699ff; color: #fff; font-weight: bold; line-height: 21px; text-align: center; }
.resize { position: absolute; right: 3px; bottom: 3px; }
</style>
